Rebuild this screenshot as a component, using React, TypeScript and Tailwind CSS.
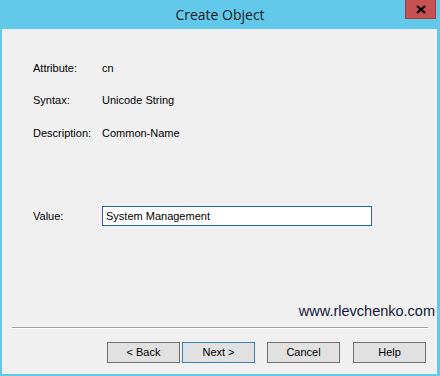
export default function App() {
  const rows = [
    { label: "Attribute:", value: "cn" },
    { label: "Syntax:", value: "Unicode String" },
    { label: "Description:", value: "Common-Name" },
  ];

  const buttons = [
    { label: "< Back", className: "border-[#707070]" },
    { label: "Next >", className: "border-[#3c7fb1] ml-[2px]" },
    { label: "Cancel", className: "border-[#707070] ml-[12px]" },
    { label: "Help", className: "border-[#707070] ml-[13px]" },
  ];

  return (
    <div className="w-[440px] h-[376px] bg-[#63c9eb] flex flex-col font-['Liberation_Sans',Arial,sans-serif] text-[11px] text-black">
      {/* title bar */}
      <div className="relative h-[29px] flex items-center justify-center">
        <span className="text-[14px] text-[#1b1b1b] font-['Open_Sans',sans-serif] -mt-[1px]">
          Create Object
        </span>
        <div className="absolute top-0 right-[4px] w-[31px] h-[19px] bg-[#c75050] border border-[#9c3c3c] border-t-0 flex items-center justify-center">
          <svg width="10" height="9" viewBox="0 0 10 9">
            <path d="M1 1 L9 8 M9 1 L1 8" stroke="#000" strokeWidth="2.2" />
          </svg>
        </div>
      </div>

      {/* client area */}
      <div className="flex-1 ml-[2px] mr-[3px] mb-[2px] bg-[#f0f0f0] flex flex-col pl-[31px]">
        <div className="mt-[32px] flex flex-col gap-[18.5px]">
          {rows.map((r) => (
            <div key={r.label} className="flex h-[14px] items-center">
              <span className="w-[69px]">{r.label}</span>
              <span>{r.value}</span>
            </div>
          ))}
        </div>

        <div className="mt-[66px] flex items-center h-[20px]">
          <span className="w-[69px]">Value:</span>
          <div className="w-[270px] h-[20px] bg-white border border-[#2d6399] flex items-center px-[3px]">
            System Management
          </div>
        </div>

        <div className="mt-[77px] flex justify-end pr-[2px]">
          <span className="text-[14.5px] text-[#10183a] leading-[16px]">
            www.rlevchenko.com
          </span>
        </div>

        <div className="mt-[8px] mr-[9px] -ml-[21px] h-[2px] border-t border-[#a0a0a0] border-b border-b-white" />

        <div className="mt-[13px] flex pl-[74px]">
          {buttons.map((b) => (
            <div
              key={b.label}
              className={`w-[73px] h-[21px] bg-[#e1e1e1] border flex items-center justify-center ${b.className}`}
            >
              {b.label}
            </div>
          ))}
        </div>
      </div>
    </div>
  );
}
